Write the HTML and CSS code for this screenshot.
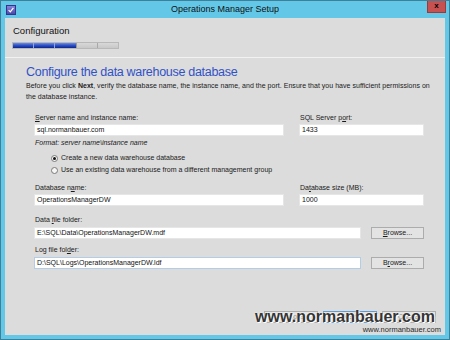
FILE: index.html
```html
<!DOCTYPE html>
<html>
<head>
<meta charset="utf-8">
<link rel="stylesheet" href="styles.css">
</head>
<body>
<div class="window">
  <div class="titlebar">
    <div class="tb-left">
      <svg class="app-icon" width="10" height="10" viewBox="0 0 10 10">
        <defs><linearGradient id="ig" x1="0" y1="0" x2="0" y2="1"><stop offset="0" stop-color="#8a88dc"/><stop offset="1" stop-color="#4644a8"/></linearGradient></defs>
        <rect x="0.5" y="0.5" width="9" height="9" fill="url(#ig)" stroke="#35348a"/>
        <path d="M2.6 5.2 L4.3 6.9 L7.4 2.8" fill="none" stroke="#fff" stroke-width="1.2"/>
      </svg>
    </div>
    <div class="title">Operations Manager Setup</div>
    <div class="tb-right"><div class="close">x</div></div>
  </div>
  <div class="client">
    <div class="header">
      <div class="step">Configuration</div>
      <div class="progress">
        <span class="seg on"></span><span class="seg on"></span><span class="seg on"></span><span class="seg"></span><span class="seg"></span>
      </div>
    </div>
    <div class="content">
      <h1 class="heading">Configure the data warehouse database</h1>
      <p class="desc">Before you click <b>Next</b>, verify the database name, the instance name, and the port. Ensure that you have sufficient permissions on<br>the database instance.</p>
      <div class="form">
        <div class="row r1">
          <div class="field wide">
            <div class="label"><u>S</u>erver name and instance name:</div>
            <div class="input">sql.normanbauer.com</div>
          </div>
          <div class="field narrow">
            <div class="label">SQL Server p<u>o</u>rt:</div>
            <div class="input">1433</div>
          </div>
        </div>
        <div class="hint">Format: server name\instance name</div>
        <div class="radios">
          <div class="radio"><span class="dot checked"></span>Create a new data warehouse database</div>
          <div class="radio"><span class="dot"></span>Use an existing data warehouse from a different management group</div>
        </div>
        <div class="row r2">
          <div class="field wide">
            <div class="label">Database n<u>a</u>me:</div>
            <div class="input">OperationsManagerDW</div>
          </div>
          <div class="field narrow">
            <div class="label">Da<u>t</u>abase size (MB):</div>
            <div class="input">1000</div>
          </div>
        </div>
        <div class="field r3">
          <div class="label">Data <u>f</u>ile folder:</div>
          <div class="pick">
            <div class="input path">E:\SQL\Data\OperationsManagerDW.mdf</div>
            <div class="btn browse"><u>B</u>rowse...</div>
          </div>
        </div>
        <div class="field r4">
          <div class="label">Log file fol<u>d</u>er:</div>
          <div class="pick">
            <div class="input path focus">D:\SQL\Logs\OperationsManagerDW.ldf</div>
            <div class="btn browse b2">B<u>r</u>owse...</div>
          </div>
        </div>
      </div>
    </div>
    <div class="footer">
      <div class="btn nav">Previous</div>
      <div class="btn nav default">Next</div>
      <div class="btn nav">Cancel</div>
    </div>
    <div class="wm-big">www.normanbauer.com</div>
    <div class="wm-small">www.normanbauer.com</div>
  </div>
</div>
</body>
</html>
```
FILE: styles.css
```css
* { box-sizing: border-box; }
html, body { margin: 0; padding: 0; }
body {
  width: 450px;
  height: 340px;
  font-family: "Liberation Sans", Arial, sans-serif;
  overflow: hidden;
}
.window {
  width: 450px;
  height: 340px;
  background: #63c8e8;
  border: 1px solid #3f7f98;
  display: flex;
  flex-direction: column;
}
.titlebar {
  height: 17px;
  display: grid;
  grid-template-columns: 1fr auto 1fr;
  align-items: start;
}
.tb-left { padding: 4px 0 0 5px; }
.app-icon { display: block; }
.title {
  font-size: 9px;
  line-height: 17px;
  color: #111;
}
.tb-right { display: flex; justify-content: flex-end; padding-right: 3px; }
.close {
  width: 19px;
  height: 12px;
  background: #c75150;
  border: 1px solid #9a3a39;
  border-top: none;
  color: #000;
  font-size: 8px;
  font-weight: bold;
  line-height: 10px;
  text-align: center;
}
.client {
  position: relative;
  margin: 0 4px 4px 4px;
  height: 317px;
  background: #dcdcdc;
  display: flex;
  flex-direction: column;
  color: #1a1a1a;
}
.header {
  height: 40px;
  padding: 7px 0 0 7px;
  border-bottom: 1px solid #f2f2f2;
}
.step {
  font-size: 9.5px;
  line-height: 12px;
  color: #111;
  padding-left: 1px;
}
.progress {
  margin-top: 5px;
  width: 107px;
  height: 7px;
  display: flex;
  border: 1px solid #b8b8b8;
  background: #cfcfcf;
}
.seg {
  flex: 1;
  border-right: 1px solid #a9a9a9;
  background: linear-gradient(#d8d8d8, #c8c8c8);
}
.seg:last-child { border-right: none; }
.seg.on {
  background: linear-gradient(#6d8de6 0%, #3153c7 45%, #0b2590 100%);
  border-right: 1px solid #8fa6e6;
}
.seg.on:nth-child(3) { border-right: 1px solid #9a9a9a; }
.content {
  padding-left: 21px;
}
.heading {
  margin: 6px 0 0 0;
  font-size: 12.5px;
  line-height: 16px;
  font-weight: normal;
  letter-spacing: -0.3px;
  color: #3152c6;
}
.desc {
  margin: 0;
  font-size: 7px;
  line-height: 11px;
  letter-spacing: 0.03px;
  color: #1a1a1a;
}
.desc b { font-weight: bold; }
.form {
  margin: 11px 0 0 8px;
  font-size: 7px;
}
.row {
  display: flex;
  gap: 15px;
}
.field { display: flex; flex-direction: column; }
.wide { width: 250px; }
.narrow { width: 125px; }
.label {
  line-height: 10px;
  color: #1a1a1a;
  padding-left: 1px;
}
.label u, .btn u { text-decoration-thickness: 0.5px; text-underline-offset: 1px; }
.input {
  margin-top: 1px;
  height: 12px;
  background: #fff;
  border: 1px solid #e6e6e6;
  line-height: 10px;
  padding-left: 2px;
  color: #111;
  white-space: nowrap;
}
.hint {
  margin-top: 2px;
  line-height: 10px;
  font-style: italic;
  padding-left: 1px;
}
.radios { margin-top: 4px; }
.radio {
  height: 12px;
  line-height: 12px;
  display: flex;
  align-items: center;
  padding-left: 17px;
}
.dot {
  width: 7px;
  height: 7px;
  border-radius: 50%;
  border: 1px solid #7a7a7a;
  background: #f6f6f6;
  margin-right: 3px;
  display: flex;
  align-items: center;
  justify-content: center;
}
.dot.checked::after {
  content: "";
  width: 3px;
  height: 3px;
  border-radius: 50%;
  background: #111;
}
.r2 { margin-top: 7px; }
.r3 { margin-top: 9px; }
.r4 { margin-top: 6px; }
.r3 .input, .r4 .input { margin-top: 2px; }
.pick {
  display: flex;
  gap: 10px;
  align-items: flex-end;
}
.path { width: 327px; }
.focus { border-color: #b3cde6; }
.btn {
  height: 12px;
  background: #e3e3e3;
  border: 1px solid #acacac;
  font-size: 7px;
  line-height: 10px;
  text-align: center;
  color: #1a1a1a;
}
.browse { width: 53px; }
.footer {
  margin-top: auto;
  display: flex;
  justify-content: flex-end;
  gap: 5px;
  padding: 0 9px 12px 0;
}
.nav { width: 54px; color: #8a8a8a; }
.nav.default { border-color: #5b9bd5; }
.wm-big {
  position: absolute;
  right: 10px;
  bottom: 10px;
  font-size: 16px;
  line-height: 16px;
  font-weight: bold;
  color: #353535;
  text-shadow: 1px 1px 0 #fff, 0 0 2px #fff;
  white-space: nowrap;
}
.wm-small {
  position: absolute;
  right: 4px;
  bottom: 1px;
  font-size: 7.5px;
  line-height: 9px;
  color: #2a2a2a;
  white-space: nowrap;
}
```
